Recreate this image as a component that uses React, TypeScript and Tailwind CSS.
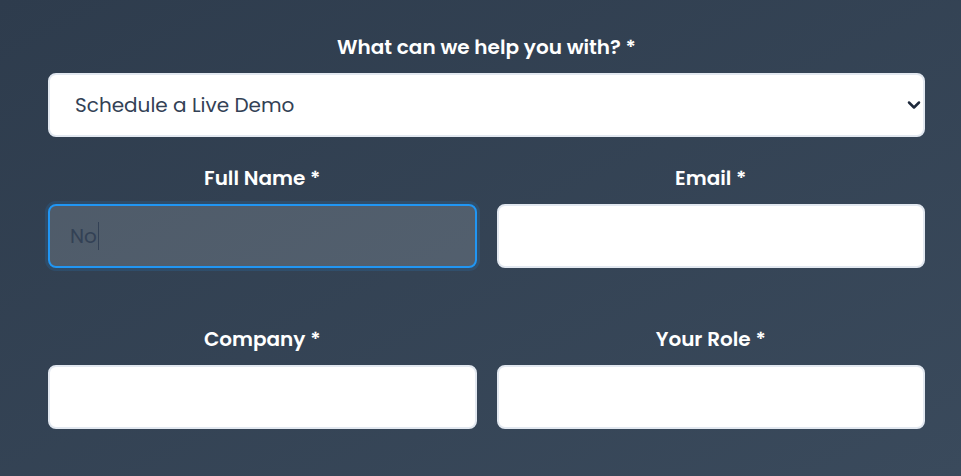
import { ChevronDown } from "lucide-react"

const font = { fontFamily: '"Poppins", "Inter", "Noto Sans", sans-serif' }

function Label({ children }: { children: React.ReactNode }) {
  return (
    <label className="block text-center text-[20px] leading-7 font-semibold text-white">
      {children}
    </label>
  )
}

function Field({ label }: { label: string }) {
  return (
    <div className="flex flex-col gap-3">
      <Label>{label}</Label>
      <input
        type="text"
        className="h-16 w-full rounded-lg border-2 border-[#e2e8f0] bg-white px-5 text-[20px] text-[#334155] outline-none"
      />
    </div>
  )
}

export default function App() {
  return (
    <div
      className="min-h-[476px] w-full bg-gradient-to-br from-[#2e3c4d] to-[#3a4a5c] pl-12 pr-9 pt-[33px]"
      style={font}
    >
      <div className="flex flex-col gap-3">
        <Label>What can we help you with? *</Label>
        <div className="relative">
          <select
            defaultValue="demo"
            className="h-16 w-full appearance-none rounded-lg border-2 border-[#e2e8f0] bg-white pl-[25px] pr-10 text-[20px] text-[#334155] outline-none"
          >
            <option value="demo">Schedule a Live Demo</option>
            <option value="sales">Talk to Sales</option>
            <option value="support">Get Support</option>
          </select>
          <ChevronDown
            className="pointer-events-none absolute right-[1px] top-1/2 size-[20px] -translate-y-1/2 text-[#1e293b]"
            strokeWidth={3}
          />
        </div>
      </div>

      <div className="mt-[27px] grid grid-cols-2 gap-x-5">
        <div className="flex flex-col gap-3">
          <Label>Full Name *</Label>
          <div className="flex h-16 w-full items-center rounded-lg border-2 border-[#2196f3] bg-white/15 px-5 text-[20px] text-[#334155] shadow-[0_0_0_3px_rgba(33,150,243,0.15)]">
            <span>No</span>
            <span className="ml-px h-[28px] w-px bg-[#334155]" />
          </div>
        </div>
        <Field label="Email *" />
      </div>

      <div className="mt-[57px] grid grid-cols-2 gap-x-5">
        <Field label="Company *" />
        <Field label="Your Role *" />
      </div>
    </div>
  )
}
